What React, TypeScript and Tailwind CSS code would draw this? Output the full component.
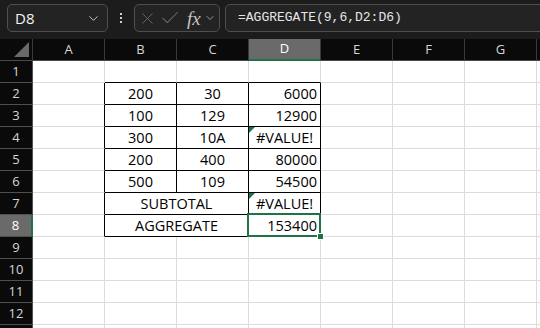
import { ChevronDown, X, Check } from "lucide-react";

const cols = ["A", "B", "C", "D", "E", "F", "G", "H"];
const rows = [1, 2, 3, 4, 5, 6, 7, 8, 9, 10, 11, 12, 13];

type Cell = { v: string; align: "center" | "right"; err?: boolean };

const data: Record<string, Cell> = {
  B2: { v: "200", align: "center" },
  C2: { v: "30", align: "center" },
  D2: { v: "6000", align: "right" },
  B3: { v: "100", align: "center" },
  C3: { v: "129", align: "center" },
  D3: { v: "12900", align: "right" },
  B4: { v: "300", align: "center" },
  C4: { v: "10A", align: "center" },
  D4: { v: "#VALUE!", align: "center", err: true },
  B5: { v: "200", align: "center" },
  C5: { v: "400", align: "center" },
  D5: { v: "80000", align: "right" },
  B6: { v: "500", align: "center" },
  C6: { v: "109", align: "center" },
  D6: { v: "54500", align: "right" },
  B7: { v: "SUBTOTAL", align: "center" },
  D7: { v: "#VALUE!", align: "center", err: true },
  B8: { v: "AGGREGATE", align: "center" },
  D8: { v: "153400", align: "right" },
};

function GridCell({ c, r }: { c: number; r: number }) {
  const name = cols[c] + r;
  const inTable = c >= 1 && c <= 3 && r >= 2 && r <= 8;
  const merged = (r === 7 || r === 8) && c === 1;
  if ((r === 7 || r === 8) && c === 2) return null;

  const rightBlack = inTable || (c === 0 && r >= 2 && r <= 8);
  const bottomBlack = inTable || (r === 1 && c >= 1 && c <= 3);
  const cell = data[name];
  const selected = name === "D8";

  return (
    <div
      className={
        "relative h-[22px] border-r border-b leading-[21px] text-[14.5px] text-black whitespace-nowrap " +
        (merged ? "col-span-2 " : "") +
        (rightBlack ? "border-r-black " : "border-r-[#dcdcdc] ") +
        (bottomBlack ? "border-b-black " : "border-b-[#dcdcdc] ") +
        (cell?.align === "right" ? "text-right pr-[3px]" : "text-center")
      }
    >
      {cell?.err && (
        <svg className="absolute left-0 top-0 z-10" width="6" height="6" viewBox="0 0 6 6">
          <path d="M0 0H6L0 6Z" fill="#1e7145" />
        </svg>
      )}
      {cell?.v}
      {selected && (
        <>
          <span className="absolute z-10 -left-[2px] -top-[2px] -right-[1px] -bottom-[1px] border-2 border-[#217346]" />
          <span className="absolute z-20 -right-[4px] -bottom-[4px] h-[7px] w-[7px] bg-[#217346] border border-white" />
        </>
      )}
    </div>
  );
}

export default function App() {
  return (
    <div
      className="w-[540px] h-[328px] overflow-hidden bg-white"
      style={{ fontFamily: '"Open Sans", "Noto Sans", sans-serif' }}
    >
      {/* formula bar */}
      <div className="h-[39px] bg-[#1c1c1c] flex items-start pt-[4px] pl-[7px] gap-[5px]">
        <div className="w-[101px] h-[28px] rounded-[5px] border border-[#4f4f4f] bg-[#232323] flex items-center pl-[7px] pr-[6px]">
          <span className="flex-1 text-[15px] text-[#f2f2f2]">D8</span>
          <ChevronDown size={15} strokeWidth={1.5} className="text-[#cfcfcf]" />
        </div>
        <div className="w-[16px] h-[28px] flex flex-col items-center justify-center gap-[2px]">
          <span className="w-[2px] h-[2px] bg-[#d0d0d0]" />
          <span className="w-[2px] h-[2px] bg-[#d0d0d0]" />
          <span className="w-[2px] h-[2px] bg-[#d0d0d0]" />
        </div>
        <div className="w-[86px] h-[28px] rounded-[5px] border border-[#4f4f4f] bg-[#232323] flex items-center pl-[3px] gap-[2px]">
          <X size={19} strokeWidth={1.1} className="text-[#6c6c6c]" />
          <Check size={22} strokeWidth={1.1} className="text-[#6c6c6c]" />
          <span
            className="ml-[4px] text-[19px] italic text-[#c4c4c4] leading-none"
            style={{ fontFamily: '"Liberation Serif", serif' }}
          >
            fx
          </span>
          <ChevronDown size={12} strokeWidth={1.5} className="ml-[1px] text-[#bdbdbd]" />
        </div>
        <div className="flex-1 -mr-[10px] h-[28px] rounded-[5px] border border-[#4f4f4f] bg-[#232323] flex items-center pl-[12px]">
          <span
            className="text-[13px] text-[#e6e6e6]"
            style={{ fontFamily: '"Liberation Mono", monospace' }}
          >
            =AGGREGATE(9,6,D2:D6)
          </span>
        </div>
      </div>

      {/* sheet */}
      <div className="grid grid-cols-[33px_repeat(8,72px)]">
        <div className="h-[22px] bg-[#0a0a0a] border-r border-b border-r-[#3a3a3a] border-b-[#4a4a4a] flex items-end justify-end pr-[3px] pb-[3px]">
          <div className="w-[15px] h-[15px] bg-[#6a6a6a] [clip-path:polygon(100%_0,100%_100%,0_100%)]" />
        </div>
        {cols.map((c) => (
          <div
            key={c}
            className={
              "h-[22px] border-r border-r-[#3a3a3a] flex items-center justify-center text-[13px] " +
              (c === "D"
                ? "bg-[#6a6a6a] text-white border-b-2 border-b-[#217346]"
                : "bg-[#0a0a0a] text-[#d6d6d6] border-b border-b-[#4a4a4a]")
            }
          >
            {c === "H" ? "" : c}
          </div>
        ))}
        {rows.map((r) => (
          <div key={r} className="contents">
            <div
              className={
                "h-[22px] border-b border-b-[#505050] flex items-center justify-center text-[13px] " +
                (r === 8
                  ? "bg-[#6a6a6a] text-white border-r-2 border-r-[#217346]"
                  : "bg-[#0a0a0a] text-[#d6d6d6] border-r border-r-[#505050]")
              }
            >
              {r === 13 ? "" : r}
            </div>
            {cols.map((_, ci) => (
              <GridCell key={ci} c={ci} r={r} />
            ))}
          </div>
        ))}
      </div>
    </div>
  );
}
